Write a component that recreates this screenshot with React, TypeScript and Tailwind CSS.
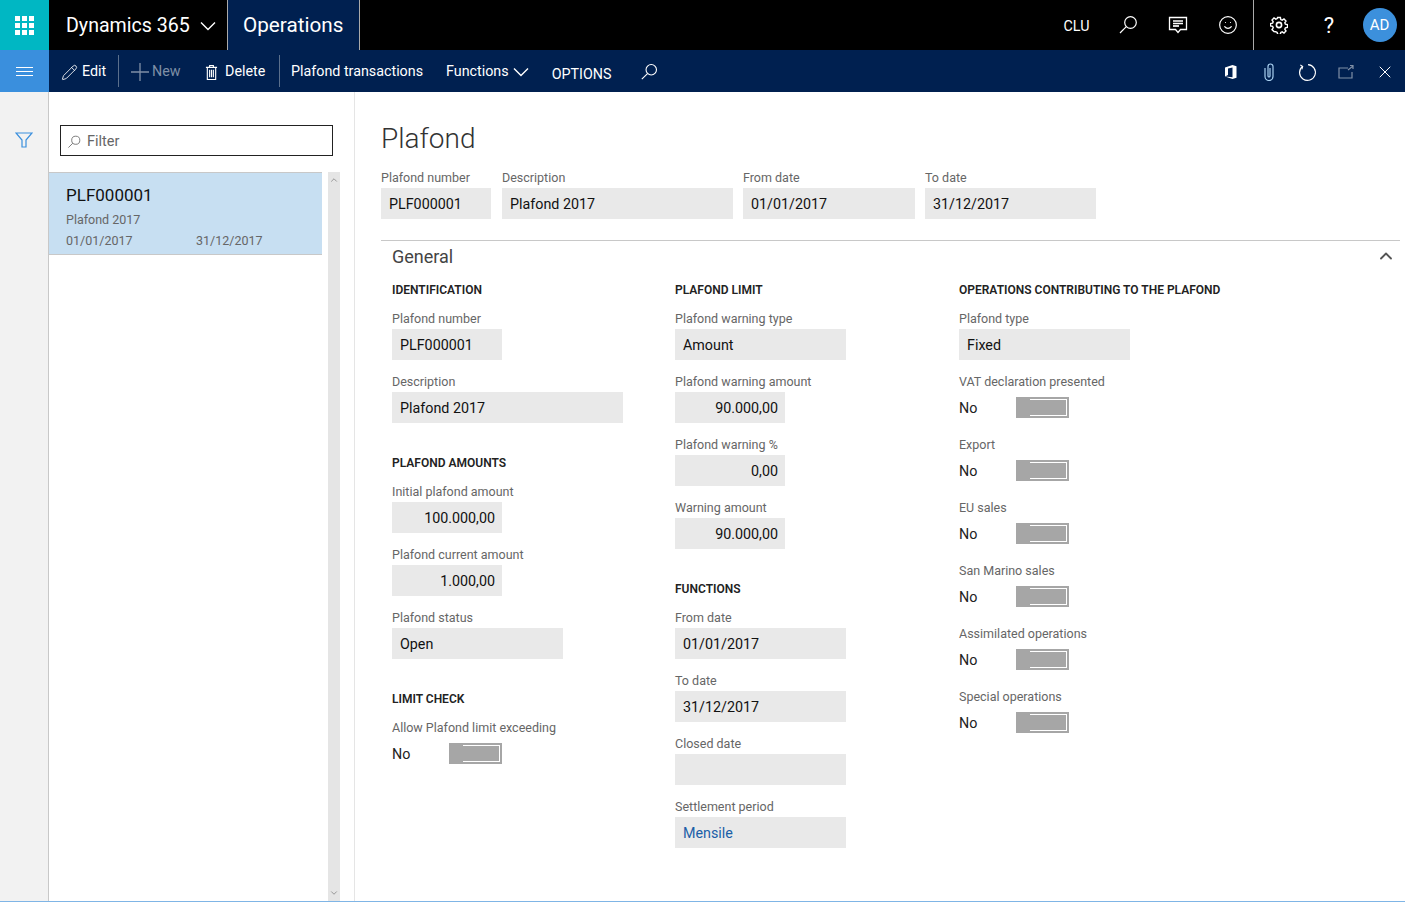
import { ChevronDown, ChevronUp, Pencil, X, Smile } from 'lucide-react';
import type { ReactNode } from 'react';

const Search = ({ className }: { className?: string }) => (
  <svg viewBox="0 0 20 20" fill="none" stroke="currentColor" strokeWidth="1.2" className={className}>
    <circle cx="12.5" cy="7.5" r="5.8" />
    <path d="M8.3 11.7 2 18" />
  </svg>
);

const Chevron = () => (
  <svg viewBox="0 0 16 10" className="h-[10px] w-[16px]" fill="none" stroke="currentColor" strokeWidth="1.4">
    <path d="M1 1.500 8 8.500 15 1.500" />
  </svg>
);

const Label = ({ children }: { children: ReactNode }) => (
  <div className="h-[19px] text-[12.5px] leading-[19px] text-[#666666]">{children}</div>
);

const Field = ({ label, value, w, right, link }: { label: string; value?: string; w: string; right?: boolean; link?: boolean }) => (
  <div>
    <Label>{label}</Label>
    <div className={`${w} mt-[1px] flex h-[31px] items-center bg-[#e9e9e9] pt-[2px] pl-2 pr-[7px] text-[14.3px] ${right ? 'justify-end' : ''} ${link ? 'text-[#1a5fa8]' : 'text-[#111111]'}`}>
      {value}
    </div>
  </div>
);

const Toggle = ({ label }: { label: string }) => (
  <div>
    <Label>{label}</Label>
    <div className="mt-[1px] flex h-[31px] items-center">
      <span className="w-[57px] pt-[2px] text-[14.3px] text-[#222222]">No</span>
      <div className="flex h-[21px] w-[53px] justify-end bg-[#a6a6a6] p-[2px]">
        <div className="h-[17px] w-[37px] border-y border-r border-white bg-[#a6a6a6]" />
      </div>
    </div>
  </div>
);

const Heading = ({ children }: { children: ReactNode }) => (
  <div className="pt-[1px] text-[12px] leading-[18px] font-semibold text-[#222222]">{children}</div>
);

export default function App() {
  return (
    <div className="flex h-[902px] w-[1405px] flex-col overflow-hidden bg-white font-['Roboto',sans-serif]">
      <header className="flex h-[50px] items-stretch bg-black text-white">
        <div className="flex w-[49px] items-center justify-center bg-[#00b7c3]">
          <div className="grid grid-cols-3 gap-[2px]">
            {Array.from({ length: 9 }).map((_, i) => (
              <span key={i} className="h-[5px] w-[5px] bg-white" />
            ))}
          </div>
        </div>
        <div className="flex w-[178px] items-center gap-[10px] pl-[17px] pt-[1px] text-[19.6px]">
          Dynamics 365
          <Chevron />
        </div>
        <div className="flex w-[133px] items-center border-x border-[#aaaaaa] bg-[#002050] pl-[15px] pt-[1px] text-[20.7px]">Operations</div>
        <div className="flex-1" />
        <div className="flex items-center">
          <span className="w-[50px] pr-[3px] pt-[3px] text-center text-[14.3px]">CLU</span>
          <div className="flex w-[50px] justify-center"><Search className="h-[20px] w-[20px]" /></div>
          <div className="flex w-[50px] justify-center">
            <svg viewBox="0 0 20 20" className="h-[20px] w-[20px]" fill="none" stroke="currentColor" strokeWidth="1.3">
              <path d="M1.500 2.500h17v12h-6l-2.500 3-2.500-3h-6z" />
              <path d="M5 6h10M5 8.500h10" strokeWidth="1.700" />
              <path d="M5 11h6" strokeWidth="1.700" />
            </svg>
          </div>
          <div className="flex w-[50px] justify-center"><Smile className="h-[20px] w-[20px]" strokeWidth={1.4} /></div>
        </div>
        <div className="flex items-center border-l border-[#aaaaaa]">
          <div className="flex w-[50px] justify-center">
            <svg viewBox="0 0 18 18" className="h-[18px] w-[18px]" fill="none" stroke="currentColor" strokeWidth="1.6">
              <circle cx="9" cy="9" r="2.600" />
              <path d="M7.600 1.500h2.800l.4 2.100 1.400.6 1.800-1.200 2 2-1.200 1.800.6 1.400 2.100.4v2.800l-2.100.4-.6 1.400 1.200 1.800-2 2-1.800-1.200-1.400.6-.4 2.100H7.600l-.4-2.100-1.400-.6L4 15.600l-2-2 1.200-1.800-.6-1.400-2.100-.4V7.600l2.100-.4.6-1.400L2 4l2-2 1.800 1.200 1.400-.6z" strokeWidth="1.400" />
            </svg>
          </div>
          <div className="flex w-[50px] justify-center text-[22px]">?</div>
          <div className="flex w-[51px] justify-center">
            <div className="flex h-[34px] w-[34px] items-center justify-center rounded-full bg-[#3c90dc] text-[15px]">AD</div>
          </div>
        </div>
      </header>

      <nav className="flex h-[42px] items-stretch bg-[#002050] text-[14.3px] text-white">
        <div className="flex w-[49px] items-center justify-center bg-[#3a8fdd]">
          <div className="flex w-[17px] flex-col gap-[3px]">
            <span className="h-[1px] bg-white" /><span className="h-[1px] bg-white" /><span className="h-[1px] bg-white" />
          </div>
        </div>
        <div className="flex flex-1 items-center pt-[2px]">
          <div className="flex w-[69px] items-center gap-[4px] pl-[12px]"><Pencil className="h-[17px] w-[17px]" strokeWidth={1.2} />Edit</div>
          <div className="-mt-[2px] h-[32px] w-px bg-[#5a6f8c]" />
          <div className="flex w-[86px] items-center gap-[3px] pl-[12px] text-[#7f8fa6]">
            <svg viewBox="0 0 18 18" className="h-[18px] w-[18px]" fill="none" stroke="currentColor" strokeWidth="1.3">
              <path d="M9 0v18M0 9h18" />
            </svg>
            New
          </div>
          <div className="flex w-[74px] items-center gap-[7px]">
            <svg viewBox="0 0 14 18" className="h-[17px] w-[13px]" fill="none" stroke="currentColor" strokeWidth="1.2">
              <path d="M1 3.500h12M5 3.500V1.500h4v2M2.500 3.500v13h9v-13" />
              <path d="M5 6v8M7 6v8M9 6v8" />
            </svg>
            Delete
          </div>
          <div className="-mt-[2px] h-[32px] w-px bg-[#5a6f8c]" />
          <div className="pl-[11px] pr-[23px]">Plafond transactions</div>
          <div className="flex items-center gap-[4px] pr-[23px]">Functions<Chevron /></div>
          <div className="mt-[5px] pr-[29px]">OPTIONS</div>
          <Search className="h-[18px] w-[18px]" />
        </div>
        <div className="flex items-center gap-[20px] pr-[10px] pt-[2px]">
          <svg viewBox="0 0 16 16" className="mr-[1px] h-[16px] w-[16px]" fill="currentColor">
            <path d="M2 3.500 9.500 1 13.500 2.200V13.800L9.500 15 2 12.500 9.500 13.300V3.600L5 4.600V11L2 12.500z" />
          </svg>
          <svg viewBox="0 0 16 18" className="h-[18px] w-[18px] text-[#a8d0f0]" fill="none" stroke="currentColor" strokeWidth="1.200">
            <path d="M4 5v8.500a4 4 0 0 0 8 0V3.500a2.500 2.500 0 0 0-5 0V13a1 1 0 0 0 2 0V5" />
          </svg>
          <svg viewBox="0 0 18 18" className="h-[19px] w-[19px]" fill="none" stroke="currentColor" strokeWidth="1.1">
            <path d="M4.200 3.200a7.500 7.500 0 1 0 5.300-1.700" /><path d="M2.200 1.800 4.400 3.400 3.600 6" />
          </svg>
          <svg viewBox="0 0 18 18" className="h-[18px] w-[18px] text-[#7f8fa6]" fill="none" stroke="currentColor" strokeWidth="1.2">
            <path d="M11 5H2v10h13V9" /><path d="M11 7l5-4M13 2.500h3V6" />
          </svg>
          <X className="h-[20px] w-[20px]" strokeWidth={1.2} />
        </div>
      </nav>

      <div className="flex min-h-0 flex-1 border-b border-[#7fb5e6]">
        <aside className="flex w-[49px] justify-center border-r border-[#c8c8c8] bg-[#f2f2f2] pt-[39px]">
          <svg viewBox="0 0 18 18" className="h-[18px] w-[18px] text-[#3a8fdd]" fill="none" stroke="currentColor" strokeWidth="1.2">
            <path d="M1 2h16l-6 7v7H7V9z" />
          </svg>
        </aside>

        <section className="w-[306px] shrink-0 border-r border-[#e5e5e5] pt-[33px]">
          <div className="ml-[11px] flex h-[31px] w-[273px] items-center gap-[6px] border border-[#222222] pt-[2px] pl-[6px] text-[14.5px] text-[#666666]">
            <Search className="h-[14px] w-[14px]" />Filter
          </div>
          <div className="mt-[16px] flex">
            <div className="h-[83px] w-[273px] border-y border-[#c8c8c8] bg-[#c7dff2] pl-[17px] pt-[10px]">
              <div className="text-[17px] leading-[25px] text-[#111111]">PLF000001</div>
              <div className="mt-[2px] text-[12.5px] leading-[19px] text-[#666666]">Plafond 2017</div>
              <div className="mt-[2px] flex text-[12.5px] leading-[19px] text-[#666666]">
                <span className="w-[130px]">01/01/2017</span><span>31/12/2017</span>
              </div>
            </div>
            <div className="ml-[6px] flex h-[729px] w-[12px] flex-col items-center justify-between bg-[#e5e5e5] text-[#888888]">
              <ChevronUp className="mt-[3px] h-[10px] w-[10px]" />
              <ChevronDown className="mb-[3px] h-[10px] w-[10px]" />
            </div>
          </div>
        </section>

        <main className="min-w-0 flex-1 pl-[26px] pr-[5px]">
          <h1 className="mt-[27px] text-[28px] leading-[40px] font-light text-[#333333]">Plafond</h1>
          <div className="mt-[9px] flex pb-[21px]">
            <div className="mr-[11px]"><Field label="Plafond number" value="PLF000001" w="w-[110px]" /></div>
            <div className="mr-[10px]"><Field label="Description" value="Plafond 2017" w="w-[231px]" /></div>
            <div className="mr-[10px]"><Field label="From date" value="01/01/2017" w="w-[172px]" /></div>
            <Field label="To date" value="31/12/2017" w="w-[171px]" />
          </div>
          <div className="flex h-[33px] items-center justify-between border-t border-[#c8c8c8] pb-[2px] pl-[11px] pr-[4px]">
            <span className="text-[18px] text-[#444444]">General</span>
            <ChevronUp className="h-[20px] w-[20px] text-[#555555]" strokeWidth={2.2} />
          </div>
          <div className="mt-[7px] flex pl-[11px]">
            <div className="w-[283px]">
              <Heading>IDENTIFICATION</Heading>
              <div className="mt-[10px] flex flex-col gap-[12px]">
                <Field label="Plafond number" value="PLF000001" w="w-[110px]" />
                <Field label="Description" value="Plafond 2017" w="w-[231px]" />
              </div>
              <div className="mt-[30px]"><Heading>PLAFOND AMOUNTS</Heading></div>
              <div className="mt-[10px] flex flex-col gap-[12px]">
                <Field label="Initial plafond amount" value="100.000,00" w="w-[110px]" right />
                <Field label="Plafond current amount" value="1.000,00" w="w-[110px]" right />
                <Field label="Plafond status" value="Open" w="w-[171px]" />
              </div>
              <div className="mt-[30px]"><Heading>LIMIT CHECK</Heading></div>
              <div className="mt-[10px]"><Toggle label="Allow Plafond limit exceeding" /></div>
            </div>
            <div className="w-[284px]">
              <Heading>PLAFOND LIMIT</Heading>
              <div className="mt-[10px] flex flex-col gap-[12px]">
                <Field label="Plafond warning type" value="Amount" w="w-[171px]" />
                <Field label="Plafond warning amount" value="90.000,00" w="w-[110px]" right />
                <Field label="Plafond warning %" value="0,00" w="w-[110px]" right />
                <Field label="Warning amount" value="90.000,00" w="w-[110px]" right />
              </div>
              <div className="mt-[30px]"><Heading>FUNCTIONS</Heading></div>
              <div className="mt-[10px] flex flex-col gap-[12px]">
                <Field label="From date" value="01/01/2017" w="w-[171px]" />
                <Field label="To date" value="31/12/2017" w="w-[171px]" />
                <Field label="Closed date" w="w-[171px]" />
                <Field label="Settlement period" value="Mensile" w="w-[171px]" link />
              </div>
            </div>
            <div>
              <Heading>OPERATIONS CONTRIBUTING TO THE PLAFOND</Heading>
              <div className="mt-[10px] flex flex-col gap-[12px]">
                <Field label="Plafond type" value="Fixed" w="w-[171px]" />
                <Toggle label="VAT declaration presented" />
                <Toggle label="Export" />
                <Toggle label="EU sales" />
                <Toggle label="San Marino sales" />
                <Toggle label="Assimilated operations" />
                <Toggle label="Special operations" />
              </div>
            </div>
          </div>
        </main>
      </div>
    </div>
  );
}
